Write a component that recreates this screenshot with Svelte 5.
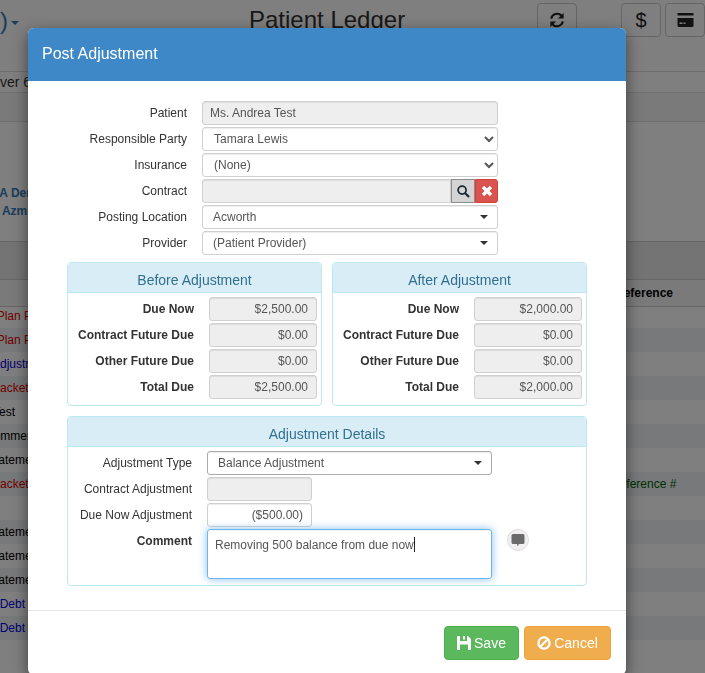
<script>
  // x = how far each row's text is pushed off the left edge
  let rows = [
    { text: 'Payment Plan Payment', kind: 'red', x: 54 },
    { text: 'Payment Plan Payment', kind: 'red', x: 54 },
    { text: 'Adjustment', kind: 'blue', x: 8 },
    { text: 'Out of Packet', kind: 'red', x: 44 },
    { text: 'Test', kind: '', x: 7 },
    { text: 'Comment', kind: '', x: 15 },
    { text: 'Statement', kind: '', x: 13 },
    { text: 'Out of Packet', kind: 'red', x: 44, ref: 'Reference #' },
    { text: '', kind: '', x: 0 },
    { text: 'Statement', kind: '', x: 13 },
    { text: 'Statement', kind: '', x: 13 },
    { text: 'Statement', kind: '', x: 13 },
    { text: 'Bad Debt', kind: 'blue', x: 25 },
    { text: 'Bad Debt', kind: 'blue', x: 25 },
    { text: '', kind: '', x: 0 }
  ];

  let summaries = [
    {
      title: 'Before Adjustment',
      lines: [
        ['Due Now', '$2,500.00'],
        ['Contract Future Due', '$0.00'],
        ['Other Future Due', '$0.00'],
        ['Total Due', '$2,500.00']
      ]
    },
    {
      title: 'After Adjustment',
      lines: [
        ['Due Now', '$2,000.00'],
        ['Contract Future Due', '$0.00'],
        ['Other Future Due', '$0.00'],
        ['Total Due', '$2,000.00']
      ]
    }
  ];
</script>

<div class="page">
  <header class="topbar">
    <span class="crumb">A)<i class="caret small"></i></span>
    <h1>Patient Ledger</h1>
    <button class="tool refresh" aria-label="Refresh">
      <svg viewBox="0 0 16 16" width="16" height="16">
        <path d="M2.200 6.600A6 6 0 0 1 12.400 3.600" fill="none" stroke="#222" stroke-width="2.100" />
        <path d="M14.600 0.900V6.600H8.900Z" fill="#222" />
        <path d="M13.800 9.400A6 6 0 0 1 3.600 12.400" fill="none" stroke="#222" stroke-width="2.100" />
        <path d="M1.400 15.100V9.400H7.100Z" fill="#222" />
      </svg>
    </button>
    <button class="tool dollar">$</button>
    <button class="tool" aria-label="Card">
      <svg viewBox="0 0 16 14" width="17" height="14">
        <path d="M0 0h16v2.500H0ZM0 5h16v7.500a1.500 1.500 0 0 1-1.500 1.500h-13A1.500 1.500 0 0 1 0 12.500ZM2 9.500v1.500h3V9.500Zm4 0v1.500h2V9.500Z" fill="#222" fill-rule="evenodd" />
      </svg>
    </button>
  </header>
  <div class="filter">Over 60</div>
  <div class="gap"></div>
  <div class="info">
    <b>ADA Dental</b>
    <b class="doctor">Dr. Azmi</b>
  </div>
  <div class="band"></div>
  <div class="thead"><span class="col"></span><span class="ref">Reference</span></div>
  {#each rows as row, i}
    <div class="tr" class:first={i === 0} class:stripe={i % 2 === 1}>
      <span class="col {row.kind}" style="text-indent: -{row.x}px">{row.text}</span>
      {#if row.ref}<span class="green">{row.ref}</span>{/if}
    </div>
  {/each}
</div>

<div class="backdrop"></div>

<div class="modal">
  <div class="modal-header">Post Adjustment</div>

  <div class="modal-body">
    <div class="form">
      <label for="patient">Patient</label>
      <input id="patient" class="field plain" value="Ms. Andrea Test" disabled />

      <label for="party">Responsible Party</label>
      <select id="party" class="field native">
        <option>Tamara Lewis</option>
      </select>

      <label for="insurance">Insurance</label>
      <select id="insurance" class="field native">
        <option>(None)</option>
      </select>

      <label for="contract">Contract</label>
      <div class="input-group">
        <input id="contract" class="field" disabled />
        <button class="addon search" aria-label="Search">
          <svg viewBox="0 0 14 14" width="13" height="13">
            <circle cx="5.500" cy="5.500" r="4.300" fill="none" stroke="#1c2833" stroke-width="1.900" />
            <path d="M8.800 8.800L13 13" stroke="#1c2833" stroke-width="2.400" />
          </svg>
        </button>
        <button class="addon clear" aria-label="Clear">
          <svg viewBox="0 0 12 12" width="12" height="12">
            <path d="M2 2L10 10M10 2L2 10" stroke="#fff" stroke-width="3.400" />
          </svg>
        </button>
      </div>

      <span class="lbl">Posting Location</span>
      <div class="field dropdown">Acworth<i class="caret"></i></div>

      <span class="lbl">Provider</span>
      <div class="field dropdown">(Patient Provider)<i class="caret"></i></div>
    </div>

    <div class="summaries">
      {#each summaries as s}
        <section class="panel">
          <h3>{s.title}</h3>
          <div class="summary-rows">
            {#each s.lines as line}
              <b>{line[0]}</b>
              <input class="field amount" value={line[1]} disabled />
            {/each}
          </div>
        </section>
      {/each}
    </div>

    <section class="panel details">
      <h3>Adjustment Details</h3>
      <div class="detail-rows">
        <span class="lbl">Adjustment Type</span>
        <div class="field dropdown strong">Balance Adjustment<i class="caret"></i></div>

        <span class="lbl">Contract Adjustment</span>
        <input class="field short" disabled />

        <span class="lbl">Due Now Adjustment</span>
        <input class="field short amount" value="($500.00)" />

        <b class="lbl comment-label">Comment</b>
        <div class="comment-wrap">
          <div class="comment" role="textbox">Removing 500 balance from due now<i class="text-caret"></i></div>
          <button class="bubble" aria-label="Comment templates">
            <svg viewBox="0 0 14 14" width="14" height="14">
              <path d="M2 1h10a1.500 1.500 0 0 1 1.500 1.500v7A1.500 1.500 0 0 1 12 11H8L6.500 13.200 6 11H2A1.500 1.500 0 0 1 .5 9.500v-7A1.500 1.500 0 0 1 2 1Z" fill="#6b6b6b" />
            </svg>
          </button>
        </div>
      </div>
    </section>
  </div>

  <div class="modal-footer">
    <button class="btn save">
      <svg viewBox="0 0 14 14" width="14" height="14">
        <path d="M0 1a1 1 0 0 1 1-1h10l3 3v10a1 1 0 0 1-1 1H1a1 1 0 0 1-1-1ZM3 0v5h7V0H8v3.500H6V0ZM3 8.500V14h8V8.500Z" fill="#fff" fill-rule="evenodd" />
      </svg>
      Save
    </button>
    <button class="btn cancel">
      <svg viewBox="0 0 14 14" width="14" height="14">
        <circle cx="7" cy="7" r="5.600" fill="none" stroke="#fff" stroke-width="2.300" />
        <path d="M3 11L11 3" stroke="#fff" stroke-width="2.300" />
      </svg>
      Cancel
    </button>
  </div>
</div>

<style>
  :global(body) {
    overflow: hidden;
    height: 673px;
    font-family: "Liberation Sans", Arial, sans-serif;
    font-size: 12px;
    color: #333;
    background: #fff;
  }

  .page {
    width: 705px;
    overflow: hidden;
  }

  .topbar {
    display: flex;
    align-items: flex-start;
    height: 72px;
    box-sizing: border-box;
    padding-top: 3px;
    border-bottom: 1px solid #ddd;
  }

  .crumb {
    flex: none;
    width: 265px;
    margin-left: -16px;
    padding-top: 4px;
    font-size: 24px;
    color: #337ab7;
  }

  h1 {
    flex: none;
    width: 284px;
    margin: 0;
    font-size: 24px;
    font-weight: 400;
    line-height: 34px;
    color: #333;
  }

  .tool {
    flex: none;
    display: flex;
    align-items: center;
    justify-content: center;
    width: 40px;
    height: 34px;
    margin-left: 4px;
    padding: 0;
    background: #fff;
    border: 1px solid #ccc;
    border-radius: 4px;
    font-family: inherit;
    color: #222;
  }

  .refresh {
    margin-right: 40px;
  }

  .dollar {
    font-size: 20px;
  }

  .filter {
    height: 20px;
    line-height: 21px;
    text-indent: -11px;
    font-size: 14px;
    white-space: nowrap;
    border-bottom: 1px solid #ddd;
  }

  .gap {
    height: 28px;
    background: #f5f5f5;
    border-bottom: 1px solid #ddd;
  }

  .info {
    height: 120px;
    box-sizing: border-box;
    padding-top: 64px;
    display: flex;
    flex-direction: column;
    gap: 4px;
    font-size: 12px;
    line-height: 14px;
    color: #337ab7;
    white-space: nowrap;
    text-indent: -18px;
    border-bottom: 1px solid #ccc;
  }

  .doctor {
    text-indent: -17px;
  }

  .band {
    height: 37px;
    background: #e8e8e8;
    border-bottom: 1px solid #ccc;
  }

  .thead {
    display: flex;
    height: 26px;
    line-height: 27px;
    background: #f5f5f5;
    border-bottom: 1px solid #ccc;
    font-weight: 700;
    color: #000;
  }

  .thead .col {
    width: 615px;
  }

  .tr {
    display: flex;
    height: 24px;
    line-height: 24px;
    white-space: nowrap;
    background: #fff;
  }

  .tr.first {
    height: 21px;
    line-height: 18px;
  }

  .tr.stripe {
    background: #eef2f5;
  }

  .col {
    flex: none;
    width: 611px;
    color: #000;
  }

  .red {
    color: #e00000;
  }

  .blue {
    color: #0000e0;
  }

  .green {
    color: #006400;
  }

  .backdrop {
    position: fixed;
    inset: 0;
    background: rgba(0, 0, 0, 0.5);
  }

  .modal {
    position: absolute;
    top: 28px;
    left: 28px;
    width: 598px;
    background: #fff;
    border-radius: 6px;
    box-shadow: 0 5px 15px rgba(0, 0, 0, 0.5);
    overflow: hidden;
  }

  .modal-header {
    height: 53px;
    box-sizing: border-box;
    padding: 15px 14px;
    background: #3f88c8;
    color: #fff;
    font-size: 16px;
    line-height: 21px;
  }

  .modal-body {
    padding: 20px 39px 24px;
    border-bottom: 1px solid #e5e5e5;
  }

  .form {
    display: grid;
    grid-template-columns: 120px 296px;
    column-gap: 15px;
    row-gap: 2px;
    align-items: center;
  }

  label,
  .lbl {
    text-align: right;
    color: #333;
  }

  .field {
    box-sizing: border-box;
    width: 100%;
    height: 24px;
    margin: 0;
    padding: 0 9px 0 10px;
    background: #fff;
    border: 1px solid #d0d0d0;
    border-radius: 3px;
    box-shadow: inset 0 1px 1px rgba(0, 0, 0, 0.075);
    font: 12px "Liberation Sans", Arial, sans-serif;
    line-height: 22px;
    color: #555;
  }

  .field:disabled {
    background: #eee;
    opacity: 1;
  }

  .plain {
    padding-left: 7px;
  }

  .native {
    padding: 0 7px;
  }

  .input-group {
    display: flex;
  }

  .input-group .field {
    flex: 1;
    min-width: 0;
    border-radius: 3px 0 0 3px;
  }

  .addon {
    flex: none;
    display: flex;
    align-items: center;
    justify-content: center;
    width: 24px;
    height: 24px;
    padding: 0;
    border: 1px solid #8c8c8c;
  }

  .search {
    background: #d4d4d4;
  }

  .clear {
    width: 23px;
    background: #d9534f;
    border-color: #d43f3a;
    border-radius: 0 3px 3px 0;
  }

  .dropdown {
    display: flex;
    align-items: center;
    justify-content: space-between;
  }

  .strong {
    border-color: #aaa;
  }

  .caret {
    display: inline-block;
    width: 0;
    height: 0;
    border-top: 4px solid #333;
    border-left: 4px solid transparent;
    border-right: 4px solid transparent;
  }

  .small {
    margin-left: 3px;
    border-top-color: #337ab7;
    vertical-align: middle;
  }

  .summaries {
    display: grid;
    grid-template-columns: 255px 255px;
    gap: 10px;
    margin-top: 7px;
  }

  .panel {
    border: 1px solid #bce8f1;
    border-radius: 4px;
    overflow: hidden;
  }

  h3 {
    margin: 0;
    height: 29px;
    line-height: 34px;
    background: #d9edf7;
    border-bottom: 1px solid #bce8f1;
    text-align: center;
    font-size: 14px;
    font-weight: 400;
    color: #31708f;
  }

  .summary-rows {
    display: grid;
    grid-template-columns: 126px 108px;
    column-gap: 15px;
    row-gap: 2px;
    align-items: center;
    padding: 4px 4px 6px 0;
  }

  .summary-rows b {
    text-align: right;
  }

  .amount {
    text-align: right;
    padding: 0 8px;
  }

  .details {
    margin-top: 10px;
  }

  .detail-rows {
    display: grid;
    grid-template-columns: 124px 1fr;
    column-gap: 15px;
    row-gap: 2px;
    align-items: center;
    padding: 4px 0 6px;
  }

  .detail-rows .dropdown {
    width: 285px;
  }

  .short {
    width: 105px;
  }

  .comment-label {
    align-self: start;
    padding-top: 5px;
  }

  .comment-wrap {
    display: flex;
    align-items: flex-start;
    gap: 15px;
  }

  .comment {
    box-sizing: border-box;
    width: 285px;
    height: 50px;
    padding: 7px;
    border: 1px solid #6db6f0;
    border-radius: 3px;
    box-shadow: inset 0 1px 1px rgba(0, 0, 0, 0.05), 0 0 8px rgba(102, 175, 233, 0.8);
    line-height: 16px;
    color: #555;
  }

  .text-caret {
    display: inline-block;
    width: 1px;
    height: 15px;
    background: #222;
    vertical-align: -3px;
  }

  .bubble {
    display: flex;
    align-items: center;
    justify-content: center;
    width: 22px;
    height: 22px;
    padding: 0;
    background: #f1efef;
    border: 1px solid #ddd;
    border-radius: 50%;
  }

  .modal-footer {
    display: flex;
    justify-content: flex-end;
    gap: 5px;
    padding: 15px;
  }

  .btn {
    display: flex;
    align-items: center;
    justify-content: center;
    gap: 3px;
    height: 34px;
    padding: 0;
    border: 1px solid;
    border-radius: 4px;
    font: 14px "Liberation Sans", Arial, sans-serif;
    color: #fff;
  }

  .save {
    width: 75px;
    background: #5cb85c;
    border-color: #4cae4c;
  }

  .cancel {
    width: 87px;
    background: #f0ad4e;
    border-color: #eea236;
  }
</style>
